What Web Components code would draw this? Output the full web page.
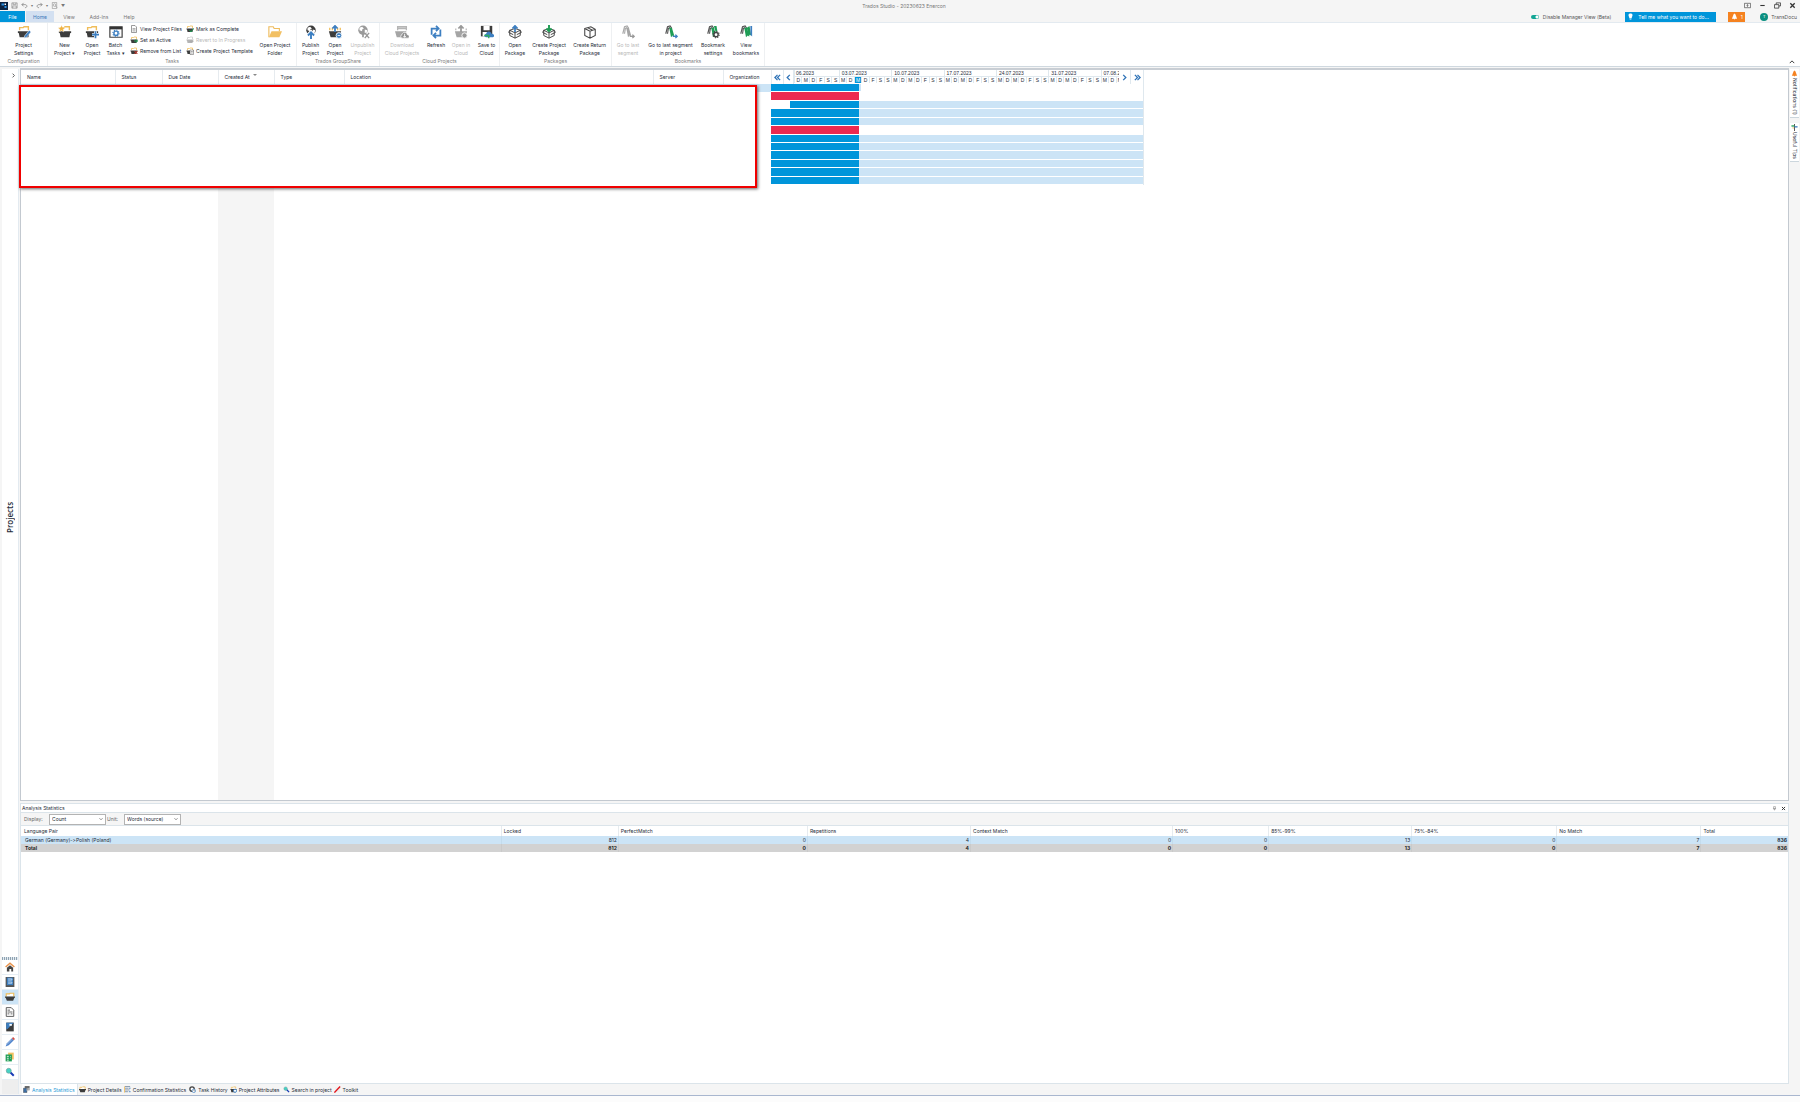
<!DOCTYPE html>
<html lang="en">
<head>
<meta charset="utf-8">
<title>Trados Studio - 20230623 Enercon</title>
<style>
  body {
    margin: 0;
    background: #f5f5f5;
    color: #1f2d3a;
    font-family: Inter, "Open Sans", "Noto Sans", sans-serif;
    font-size: 5px;
    line-height: 8px;
    font-variant-ligatures: none;
  }
</style>
</head>
<body>
<studio-window>
  <title-bar slot="title">Trados Studio - 20230623 Enercon</title-bar>
  <ribbon-tabs slot="tabs"></ribbon-tabs>
  <ribbon-bar slot="ribbon">
    <ribbon-group label="Configuration" style="--w: 48px">
      <ribbon-button icon="settings" style="--w: 48px">Project<br>Settings</ribbon-button>
    </ribbon-group>
    <ribbon-group label="Tasks" style="--w: 249px">
      <ribbon-button icon="new" style="--w: 33px">New<br>Project ▾</ribbon-button>
      <ribbon-button icon="open" style="--w: 22px">Open<br>Project</ribbon-button>
      <ribbon-button icon="batch" style="--w: 25px">Batch<br>Tasks ▾</ribbon-button>
      <ribbon-list style="--w: 56px">
        <ribbon-link icon="doc">View Project Files</ribbon-link>
        <ribbon-link icon="active">Set as Active</ribbon-link>
        <ribbon-link icon="remove">Remove from List</ribbon-link>
      </ribbon-list>
      <ribbon-list style="--w: 72px">
        <ribbon-link icon="complete">Mark as Complete</ribbon-link>
        <ribbon-link icon="revert" disabled>Revert to In Progress</ribbon-link>
        <ribbon-link icon="template">Create Project Template</ribbon-link>
      </ribbon-list>
      <ribbon-button icon="folder" style="--w: 38px">Open Project<br>Folder</ribbon-button>
    </ribbon-group>
    <ribbon-group label="Trados GroupShare" style="--w: 83px">
      <ribbon-button icon="publish" style="--w: 27px">Publish<br>Project</ribbon-button>
      <ribbon-button icon="openServer" style="--w: 22px">Open<br>Project</ribbon-button>
      <ribbon-button icon="unpublish" disabled style="--w: 33px">Unpublish<br>Project</ribbon-button>
    </ribbon-group>
    <ribbon-group label="Cloud Projects" style="--w: 120px">
      <ribbon-button icon="download" disabled style="--w: 44px">Download<br>Cloud Projects</ribbon-button>
      <ribbon-button icon="refresh" style="--w: 24px">Refresh</ribbon-button>
      <ribbon-button icon="openCloud" disabled style="--w: 26px">Open in<br>Cloud</ribbon-button>
      <ribbon-button icon="save" style="--w: 25px">Save to<br>Cloud</ribbon-button>
    </ribbon-group>
    <ribbon-group label="Packages" style="--w: 112px">
      <ribbon-button icon="box" style="--w: 30px">Open<br>Package</ribbon-button>
      <ribbon-button icon="boxNew" style="--w: 39px">Create Project<br>Package</ribbon-button>
      <ribbon-button icon="boxReturn" style="--w: 43px">Create Return<br>Package</ribbon-button>
    </ribbon-group>
    <ribbon-group label="Bookmarks" style="--w: 153px">
      <ribbon-button icon="lastSeg" disabled style="--w: 32px">Go to last<br>segment</ribbon-button>
      <ribbon-button icon="lastProj" style="--w: 53px">Go to last segment<br>in project</ribbon-button>
      <ribbon-button icon="markSettings" style="--w: 32px">Bookmark<br>settings</ribbon-button>
      <ribbon-button icon="marks" style="--w: 34px">View<br>bookmarks</ribbon-button>
    </ribbon-group>
  </ribbon-bar>
  <side-nav slot="nav">Projects</side-nav>
  <project-view>
    <project-list></project-list>
    <gantt-chart></gantt-chart>
  </project-view>
  <analysis-panel></analysis-panel>
  <pane-tabs></pane-tabs>
  <side-tabs slot="aside"></side-tabs>
</studio-window>

<script>
// small helper: every element gets an open shadow root cloned from a template
function define(name, html, setup) {
  const template = document.createElement('template')
  template.innerHTML = html

  window.customElements.define(name, class extends HTMLElement {
    constructor() {
      super();
      this._shadowRoot = this.attachShadow({ mode: 'open' });
      this._shadowRoot.appendChild(template.content.cloneNode(true));
    }

    connectedCallback() {
      if (setup) setup(this, this._shadowRoot);
    }
  });
}

const basket = (fill, tab) => `<path d="M3 6V3h4l1-1h5v4" fill="none" stroke="${tab}" stroke-width="1.6"/><path d="M1 7h14v2h-1l-1 5H3L2 9H1z" fill="${fill}"/>`
const globe = (c) => `<circle cx="8" cy="6" r="5.4" fill="${c}"/><path d="M4 3l3-1 2 2-2 1 0 2-3-1zM10 5l3 1-1 3-2 0z" fill="#fff"/>`
const cube = '<path d="M2 6l6-2 6 2v6l-6 3-6-3zM2 6l6 3 6-3M8 9v6M2 6L.8 8.5 6 11M14 6l1.2 2.5L10 11" fill="none" stroke="#444" stroke-width="1.1"/>'
const ribbonMark = (c, g) => `<path d="M2 10L4 2l3-1 2 3M4 10l1-6 2-1" fill="none" stroke="${c}" stroke-width="1.3"/><path d="M6 3h3l3 10-2-1-2 2z" fill="${g}"/>`
const gear = (x, y, c) => `<circle cx="${x}" cy="${y}" r="2.4" fill="#fff" stroke="${c}" stroke-width="1.6"/><circle cx="${x}" cy="${y}" r="3.6" fill="none" stroke="${c}" stroke-width="1.2" stroke-dasharray="1.4 1.4"/>`

const icons = {
  app: '<rect width="16" height="16" fill="#0c2340"/><path d="M3 3h5v4H3zM9 8h4v4H9z" fill="#2b8fe0"/><path d="M9 3h3v3H9z" fill="#fff"/>',
  disk: '<path d="M2 2h12v12H2zM5 2v4h6V2M4 14V9h8v5" fill="none" stroke="#888" stroke-width="1.5"/>',
  undo: '<path d="M6 2L2 6l4 4M2 6h7c6 0 6 7 0 7" fill="none" stroke="#777" stroke-width="1.6"/>',
  redo: '<path d="M10 2l4 4-4 4M14 6H7c-6 0-6 7 0 7" fill="none" stroke="#777" stroke-width="1.6"/>',
  preview: '<path d="M3 1h10v14H3z" fill="none" stroke="#888" stroke-width="1.3"/><circle cx="8" cy="7" r="3" fill="none" stroke="#888" stroke-width="1.3"/><path d="M10 9l4 4" stroke="#888" stroke-width="1.5"/>',
  settings: basket('#3c3c3c', '#f0bd59') + '<path d="M9 12l5-6 2 2-5 6-3 1z" fill="#3d7fc1" stroke="#fff" stroke-width=".6"/>',
  new: basket('#3c3c3c', '#f0bd59') + '<path d="M4 0l1.2 2.8 3 .2-2.3 2 .8 3L4 6.400 1.500 8l.7-3L0 3l3-.2z" fill="#f0b240" stroke="#fff" stroke-width=".4"/>',
  open: basket('#3c3c3c', '#f0bd59') + '<path d="M12 7v8M8 11h8" stroke="#fff" stroke-width="3.4"/><path d="M12 7v8M8 11h8" stroke="#3d7fc1" stroke-width="2"/>',
  batch: '<path d="M1 2h14v12H1z" fill="#fff" stroke="#444" stroke-width="1.4"/><path d="M1 2h14v3H1z" fill="#333"/>' + gear(8, 9.400, '#3d7fc1'),
  doc: '<path d="M3 1h7l3 3v11H3z" fill="#fff" stroke="#666" stroke-width="1.3"/><path d="M5 7h6M5 9.500h6M5 12h6" stroke="#666"/>',
  active: basket('#3c3c3c', '#f0bd59') + '<path d="M8 10h7M12 7l3 3-3 3" fill="none" stroke="#1f9d55" stroke-width="2"/>',
  remove: basket('#3c3c3c', '#f0bd59') + '<path d="M9 8l6 6M15 8l-6 6" stroke="#d63b2f" stroke-width="2"/>',
  complete: basket('#3c3c3c', '#f0bd59') + '<path d="M7 10l3 4 5-7" fill="none" stroke="#1f9d55" stroke-width="2"/>',
  revert: basket('#b5b5b5', '#c9c9c9') + '<path d="M8 11h7M11 8l-3 3 3 3" fill="none" stroke="#aaa" stroke-width="1.6"/>',
  template: basket('#3c3c3c', '#f0bd59') + '<path d="M8 6h7v9H8z" fill="#fff" stroke="#555"/><path d="M9.500 9h4M9.500 12h4" stroke="#555"/>',
  folder: '<path d="M1 14V2h5l1 2h6v3" fill="#fff" stroke="#eebc5e" stroke-width="1.3"/><path d="M1 14l3-7h12l-3 7z" fill="#f2c063"/>',
  publish: globe('#3c3c3c') + '<path d="M8 16v-7M4.500 12L8 8l3.500 4" fill="none" stroke="#fff" stroke-width="4"/><path d="M8 16V9M4.500 12L8 8.500 11.500 12" fill="none" stroke="#3d7fc1" stroke-width="2.2"/>',
  openServer: '<path d="M2 6V3M5 6V3M11 6V3M14 6V3" stroke="#f0bd59" stroke-width="1.5"/><path d="M1 7h14l-2 7H3z" fill="#3c3c3c"/><path d="M8 8V1M5 4l3-3 3 3" fill="none" stroke="#3d7fc1" stroke-width="2"/><circle cx="12.500" cy="12" r="3.300" fill="#3d7fc1" stroke="#fff"/><path d="M11 12h3" stroke="#fff"/>',
  unpublish: globe('#9a9a9a') + '<path d="M8 8v6" stroke="#9a9a9a" stroke-width="2"/><path d="M10 9l5 6M15 9l-5 6" stroke="#999" stroke-width="1.600"/>',
  download: '<path d="M3 6V2h10v4M3 4h10" fill="none" stroke="#b5b5b5" stroke-width="1.500"/><path d="M0 7h13l-2 7H2z" fill="#a5a5a5"/><path d="M8 15c-2 0-2-4 0-4 1-4 6-3 6 0 3 0 3 4 1 4z" fill="#8f8f8f" stroke="#fff" stroke-width=".8"/><path d="M11 10v4M9.500 12.500L11 14l1.500-1.500" fill="none" stroke="#fff"/>',
  refresh: '<path d="M3 11V4h7M8 1l3 3-3 3M13 5v7H6M8 9l-3 3 3 3" fill="none" stroke="#3d7fc1" stroke-width="2"/>',
  openCloud: '<path d="M2 6V4M14 6V4" stroke="#bbb" stroke-width="1.500"/><path d="M1 7h14l-2 7H3z" fill="#a5a5a5"/><path d="M8 8V1M5 4l3-3 3 3" fill="none" stroke="#999" stroke-width="2"/><circle cx="12" cy="12" r="3" fill="#999" stroke="#fff"/>',
  save: '<path d="M1 1h13v12H1z" fill="#3c3c3c"/><path d="M4 1h7v5H4zM3 8h5v5H3z" fill="#fff"/><path d="M7 14c-3 0-2-4 0-4 1-4 6-3 6 0 4 0 4 4 1 4z" fill="#3d7fc1"/><path d="M5 12h5v3" fill="none" stroke="#2fae60" stroke-width="1.600"/>',
  box: cube + '<path d="M8 8V1M5 4l3-3 3 3" fill="none" stroke="#3d7fc1" stroke-width="2"/>',
  boxNew: cube + '<path d="M8 0v7M5 4l3 3 3-3" fill="none" stroke="#1f9d55" stroke-width="2.200"/>',
  boxReturn: '<path d="M2 4l7-2 5 3v7l-6 3-6-3zM2 4l6 3 6-2M8 7v8M5 3l6 3" fill="none" stroke="#444" stroke-width="1.200"/>',
  lastSeg: ribbonMark('#aaa', '#a5a5a5') + '<path d="M10 13h5M13 11l2 2-2 2" fill="none" stroke="#999" stroke-width="1.500"/>',
  lastProj: ribbonMark('#555', '#1f9d55') + '<path d="M10 13h5M13 11l2 2-2 2" fill="none" stroke="#3d7fc1" stroke-width="1.500"/>',
  markSettings: ribbonMark('#555', '#1f9d55') + '<path d="M9 1l3 0 1 6-2 1z" fill="#1f9d55"/>' + gear(11.500, 11, '#444'),
  marks: ribbonMark('#555', '#1f9d55') + '<path d="M9 3l3-2 2 11-2-1-1 2z" fill="#1f9d55"/><path d="M13 1h2v12l-2-2z" fill="#3d7fc1"/>',
  home: '<path d="M1 8l7-6 7 6" fill="none" stroke="#e8924a" stroke-width="2.400"/><path d="M3 9l5-4 5 4v6h-3v-4H7v4H3z" fill="#444"/>',
  tm: '<rect x="1" y="0" width="14" height="16" fill="#555"/><rect x="3" y="1" width="10" height="12" fill="#3d7fc1"/><path d="M5 3h6v2H5M5 8h6v2H5" fill="none" stroke="#cfe0f2" stroke-width="1.200"/>',
  projects: '<path d="M2 7V3h5l1-1h6v5" fill="#fff" stroke="#f0bd59" stroke-width="1.800"/><path d="M0 7h16v2h-1l-2 5H3L1 9H0z" fill="#3c3c3c"/>',
  files: '<path d="M2 1h8l4 4v10H2z" fill="#fff" stroke="#555" stroke-width="1.500"/><path d="M4 5h4M4 8h8M4 11h3M9 11h3" stroke="#555" stroke-width="1.400"/>',
  editor: '<rect x="2" y="1" width="12" height="14" fill="#3c3c3c"/><path d="M2 1h12L4 11H2z" fill="#3d7fc1"/><path d="M7 3h4v3H7z" fill="#fff"/>',
  pen: '<path d="M1 15l2-5 8-8 3 3-8 8z" fill="#4f83cc"/><path d="M11 2l2-2 3 3-2 2z" fill="#d0504a"/><path d="M3 12l8-8" stroke="#cde" />',
  sheets: '<path d="M5 1h9v11H5z" fill="#f2c063"/><path d="M1 4h10v11H1z" fill="#1f9d55"/><path d="M3 7h3M3 10h3M8 7h1M8 10h1M3 13h3" stroke="#fff" stroke-width="1.300"/>',
  search: '<path d="M8 8l6 6" stroke="#1739b5" stroke-width="3"/><circle cx="6" cy="6" r="4" fill="#46d2c4" stroke="#6a9a9a"/>',
  stats: '<path d="M4 1h11v9H4z" fill="#888"/><path d="M4 1h11v2H4z" fill="#333"/><path d="M1 5h8v10H1z" fill="#3c6ea5" stroke="#444"/><path d="M9 5v6M12 5v5" stroke="#fff"/>',
  confirm: '<path d="M2 1h12M2 5h8M2 9h11M2 13h7" stroke="#7a8ea5" stroke-width="2"/><path d="M1 1v14" stroke="#f0bd59" stroke-width="2"/><path d="M11 5h4M11 13h4" stroke="#3d7fc1" stroke-width="2"/>',
  history: '<circle cx="7" cy="7" r="5" fill="#fff" stroke="#444" stroke-width="3"/><circle cx="11" cy="11" r="4" fill="#fff" stroke="#3d7fc1" stroke-width="1.500"/><path d="M11 8v3h3" fill="none" stroke="#444"/>',
  attributes: basket('#3c3c3c', '#f0bd59') + '<circle cx="11.500" cy="11" r="3.500" fill="#fff" stroke="#3d7fc1" stroke-width="2"/>',
  toolkit: '<path d="M3 3h10v11H3z" fill="#eee"/><path d="M1 15L14 1" stroke="#e3131b" stroke-width="3"/>',
  bell: '<path d="M8 1l2 2 3 8 1 2H2l1-2 3-8zM6 13h4l-2 2z" fill="currentColor"/>',
  bulb: '<path d="M8 1c6 0 5 6 3 8v3H5V9C3 7 2 1 8 1zM6 13h4v2H6z" fill="#fff"/>',
  signpost: '<path d="M8 0v16" stroke="#444" stroke-width="2"/><path d="M1 3h7v3H1z" fill="#1f9d55"/><path d="M8 5h7v3H8z" fill="#3d7fc1"/><path d="M3 8h4v2H3z" fill="#f0bd59"/>',
  ribbonOpts: '<path d="M1 3h14v10H1z" fill="none" stroke="#444" stroke-width="1.500"/><path d="M8 6v5M6 8l2-2 2 2" fill="none" stroke="#444" stroke-width="1.500"/>',
  min: '<path d="M3 8h10" stroke="#333" stroke-width="2.500"/>',
  restore: '<path d="M5 5V2h10v7h-4M1 6h10v8H1z" fill="none" stroke="#333" stroke-width="1.800"/>',
  close: '<path d="M3 3l10 10M13 3L3 13" stroke="#333" stroke-width="3"/>',
  pin: '<path d="M5 2h6v7H5zM3 9h10M8 9v5" fill="none" stroke="#777" stroke-width="1.600"/>',
  up: '<path d="M2 11l6-6 6 6" fill="none" stroke="#333" stroke-width="2.500"/>',
  right: '<path d="M5 2l6 6-6 6" fill="none" stroke="currentColor" stroke-width="3"/>',
  left: '<path d="M11 2L5 8l6 6" fill="none" stroke="currentColor" stroke-width="3"/>',
  first: '<path d="M8 2L2 8l6 6M14 2L8 8l6 6" fill="none" stroke="currentColor" stroke-width="3"/>',
  last: '<path d="M8 2l6 6-6 6M2 2l6 6-6 6" fill="none" stroke="currentColor" stroke-width="3"/>'
}

define('ui-icon', `
  <style>
  :host { display: block; flex: none; width: var(--size, 8px); height: var(--size, 8px); }
  svg { display: block; width: 100%; height: 100%; }
  </style>
  <svg viewBox="0 0 16 16" aria-hidden="true"></svg>
`, (el, root) => {
  root.querySelector('svg').innerHTML = icons[el.getAttribute('name')] || '';
})

const resetButton = 'button { border: 0; padding: 0; background: none; color: inherit; font: inherit; cursor: pointer; }'

define('studio-window', `
  <style>
  :host { display: flex; flex-direction: column; min-height: 100vh; }
  .body { flex: 1; display: flex; }
  .center { flex: 1; display: flex; flex-direction: column; min-width: 0; padding-top: 1px; }
  .foot { height: 6px; background: #fcfcfc; border-top: 1px solid #a9b7cf; }
  </style>
  <slot name="title"></slot>
  <slot name="tabs"></slot>
  <slot name="ribbon"></slot>
  <div class="body">
    <slot name="nav"></slot>
    <div class="center"><slot></slot></div>
    <slot name="aside"></slot>
  </div>
  <div class="foot"></div>
`)

define('title-bar', `
  <style>
  :host {
    display: grid;
    grid-template-columns: 1fr auto 1fr;
    align-items: center;
    height: 11px;
    color: #777;
    --size: 7px;
  }
  ${resetButton}
  .quick, .win { display: flex; align-items: center; }
  .quick { gap: 3px; font-size: 4px; }
  .name { padding-left: 8px; }
  .win { justify-content: flex-end; gap: 8px; padding-right: 4px; }
  ui-icon[name=app] { --size: 8px; }
  </style>
  <div class="quick">
    <ui-icon name="app"></ui-icon>
    <button aria-label="Save"><ui-icon name="disk"></ui-icon></button>
    <button aria-label="Undo"><ui-icon name="undo"></ui-icon></button>▾
    <button aria-label="Redo"><ui-icon name="redo"></ui-icon></button>▾
    <button aria-label="Preview"><ui-icon name="preview"></ui-icon></button>▼
  </div>
  <div class="name"><slot></slot></div>
  <div class="win">
    <button aria-label="Ribbon options"><ui-icon name="ribbonOpts"></ui-icon></button>
    <button aria-label="Minimize"><ui-icon name="min"></ui-icon></button>
    <button aria-label="Restore"><ui-icon name="restore"></ui-icon></button>
    <button aria-label="Close"><ui-icon name="close"></ui-icon></button>
  </div>
`)

define('ribbon-tabs', `
  <style>
  :host { display: flex; align-items: stretch; height: 11px; border-bottom: 1px solid #e3eaf0; color: #777; }
  ${resetButton}
  .tab { min-width: 30px; }
  .file { min-width: 25px; margin-right: 1px; background: #0095da; color: #fff; }
  .home { min-width: 28px; background: #d3e0f1; color: #3a78b9; }
  .right { margin-left: auto; display: flex; align-items: center; }
  label { display: flex; align-items: center; gap: 4px; margin-right: 14px; color: #555; }
  .switch {
    appearance: none; width: 8px; height: 4px; margin: 0; border-radius: 2px;
    background: radial-gradient(circle at 6px 2px, #fff 1px, #12a594 2px);
  }
  .tell { display: flex; align-items: center; gap: 4px; width: 91px; height: 10px; padding: 0 2px; box-sizing: border-box; background: #0095da; color: #fff; --size: 7px; }
  .tell input { flex: 1; min-width: 0; padding: 0; border: 0; background: none; font: inherit; color: #fff; }
  .tell input::placeholder { color: #fff; opacity: 1; }
  .bell { display: flex; align-items: center; justify-content: center; gap: 3px; width: 17px; height: 10px; margin: 0 15px 0 12px; background: #f58220; color: #fff; --size: 7px; }
  .user { display: flex; align-items: center; gap: 3px; color: #555; padding-right: 3px; }
  .user i { width: 8px; height: 8px; border-radius: 50%; background: #0b8f81; color: #fff; font-style: normal; font-size: 4px; text-align: center; }
  </style>
  <button class="tab file">File</button>
  <button class="tab home">Home</button>
  <button class="tab">View</button>
  <button class="tab">Add-Ins</button>
  <button class="tab">Help</button>
  <div class="right">
    <label><input type="checkbox" class="switch">Disable Manager View (Beta)</label>
    <div class="tell"><ui-icon name="bulb"></ui-icon><input type="text" aria-label="Tell me" placeholder="Tell me what you want to do..."></div>
    <button class="bell"><ui-icon name="bell"></ui-icon>1</button>
    <div class="user"><i>T</i>TransDocu</div>
  </div>
`)

define('ribbon-bar', `
  <style>
  :host { display: flex; height: 44px; background: #fff; border-bottom: 1px solid #cfd8df; box-sizing: border-box; }
  ${resetButton}
  button { margin: auto 5px 1px auto; --size: 6px; }
  </style>
  <slot></slot>
  <button aria-label="Collapse ribbon"><ui-icon name="up"></ui-icon></button>
`)

define('ribbon-group', `
  <style>
  :host { display: flex; flex-direction: column; width: var(--w); padding-top: 2px; box-sizing: border-box; border-right: 1px solid #eef0f2; }
  .items { display: flex; height: 32px; }
  .label { text-align: center; color: #7c7c7c; }
  </style>
  <div class="items"><slot></slot></div>
  <div class="label"></div>
`, (el, root) => {
  root.querySelector('.label').textContent = el.getAttribute('label');
})

define('ribbon-button', `
  <style>
  :host { display: block; width: var(--w); }
  ${resetButton}
  button { display: flex; flex-direction: column; align-items: center; width: 100%; white-space: nowrap; text-align: center; gap: 2px; --size: 14px; }
  button:hover { background: #e5f1fb; }
  button:disabled { color: #b9b9b9; }
  span { display: block; }
  </style>
  <button><ui-icon></ui-icon><span><slot></slot></span></button>
`, (el, root) => {
  const icon = document.createElement('ui-icon');
  icon.setAttribute('name', el.getAttribute('icon'));
  root.querySelector('ui-icon').replaceWith(icon);
  root.querySelector('button').disabled = el.hasAttribute('disabled');
})

define('ribbon-list', `
  <style>
  :host { display: flex; flex-direction: column; gap: 3px; width: var(--w); padding-left: 2px; box-sizing: border-box; }
  </style>
  <slot></slot>
`)

define('ribbon-link', `
  <style>
  :host { display: block; }
  ${resetButton}
  button { display: flex; align-items: center; gap: 2px; white-space: nowrap; --size: 8px; }
  button:disabled { color: #b9b9b9; }
  </style>
  <button><ui-icon></ui-icon><slot></slot></button>
`, (el, root) => {
  const icon = document.createElement('ui-icon');
  icon.setAttribute('name', el.getAttribute('icon'));
  root.querySelector('ui-icon').replaceWith(icon);
  root.querySelector('button').disabled = el.hasAttribute('disabled');
})

define('side-nav', `
  <style>
  :host { display: flex; flex-direction: column; width: 17px; margin: 2px 1px 1px 2px; background: #fff; border-right: 1px solid #e3eaf0; box-sizing: border-box; }
  ${resetButton}
  .expand { align-self: flex-end; margin: 4px 2px 0 0; --size: 5px; color: #555; }
  .title { flex: 1; display: flex; align-items: center; justify-content: center; writing-mode: vertical-rl; transform: rotate(180deg); font-size: 8px; line-height: 14px; font-family: "Open Sans", sans-serif; font-weight: 600; }
  .grip { height: 3px; background: repeating-linear-gradient(90deg, #8fa3b2 0 1px, #e3eaf0 1px 2px); }
  nav { display: flex; flex-direction: column; --size: 10px; }
  nav button { display: flex; align-items: center; justify-content: center; height: 15px; box-sizing: border-box; border-bottom: 1px solid #e6eef4; }
  nav .on { background: #cce4f6; }
  .rest { height: 14px; background: #eee; }
  </style>
  <button class="expand" aria-label="Expand"><ui-icon name="right"></ui-icon></button>
  <div class="title"><slot></slot></div>
  <div class="grip"></div>
  <nav></nav>
  <div class="rest"></div>
`, (el, root) => {
  root.querySelector('nav').innerHTML = ['home', 'tm', 'projects', 'files', 'editor', 'pen', 'sheets', 'search']
    .map(n => `<button aria-label="${n}" class="${n === 'projects' ? 'on' : ''}"><ui-icon name="${n}"></ui-icon></button>`).join('');
})

define('side-tabs', `
  <style>
  :host { display: flex; flex-direction: column; align-items: flex-start; gap: 5px; width: 11px; padding: 2px 0 0 1px; box-sizing: border-box; }
  ${resetButton}
  button { display: flex; align-items: center; gap: 1px; padding: 1px 0 2px; background: #fff; border-bottom: 1px solid #ccd6dd; writing-mode: vertical-rl; width: 9px; line-height: 8px; white-space: nowrap; --size: 7px; }
  [name=bell] { color: #f58220; }
  </style>
  <button><ui-icon name="bell"></ui-icon>Notifications (1)</button>
  <button><ui-icon name="signpost"></ui-icon>Useful Tips</button>
`)

define('project-view', `
  <style>
  :host {
    flex: 1;
    display: grid;
    grid-template-columns: 750px 373px 1fr;
    margin-bottom: 2px;
    background: #fff;
    border: 1px solid #c3c9d0;
    border-top: 2px solid #c9ced4;
  }
  </style>
  <slot></slot>
`)

define('project-list', `
  <style>
  :host { display: block; position: relative; }
  table { width: 100%; height: 100%; border-collapse: collapse; table-layout: fixed; }
  th { height: 14px; padding: 0 0 1px 6px; box-sizing: border-box; border-right: 1px solid #e6ebef; font-weight: 400; text-align: left; vertical-align: middle; }
  td { padding: 0; }
  .selected td { height: 8px; background: #cce4f6; }
  .rest .sorted { background: #f5f5f5; }
  .arrow { display: inline-block; margin: 0 0 3px 2px; border: 2px solid transparent; border-top-color: #888; border-bottom: 0; }
  .mask { position: absolute; top: 15px; left: -2px; right: 14px; height: 99px; background: #fff; border: 2px solid #f00000; box-shadow: 1px 1px 3px #666; }
  </style>
  <table>
    <colgroup><col style="width:94px"><col style="width:47px"><col style="width:56px"><col style="width:56px"><col style="width:70px"><col style="width:309px"><col style="width:70px"><col style="width:48px"></colgroup>
    <thead><tr><th>Name</th><th>Status</th><th>Due Date</th><th>Created At <span class="arrow"></span></th><th>Type</th><th>Location</th><th>Server</th><th>Organization</th></tr></thead>
    <tbody>
      <tr class="selected"><td colspan="8"></td></tr>
      <tr class="rest"><td colspan="3"></td><td class="sorted"></td><td colspan="4"></td></tr>
    </tbody>
  </table>
  <div class="mask"></div>
`)

define('gantt-chart', `
  <style>
  :host { display: block; font: 5px/6px "Liberation Sans", Arial, sans-serif; }
  ${resetButton}
  header { display: grid; grid-template-columns: 13px 10px 1fr 12px 13px; height: 14px; }
  header button { display: flex; align-items: center; justify-content: center; border-right: 1px solid #dfe8ee; color: #2f73b7; --size: 7px; }
  .scale { overflow: hidden; }
  .weeks, .days { display: grid; grid-template-columns: repeat(44, 1fr); width: 329px; }
  .weeks span { grid-column: span 7; padding-left: 2px; border-left: 1px solid #dfe8ee; height: 6px; box-sizing: border-box; white-space: nowrap; }
  .weeks span:first-child { grid-column: span 6; padding-left: 1px; }
  .weeks span:last-child { grid-column: span 3; }
  .days span { height: 7px; line-height: 7px; text-align: center; box-sizing: border-box; border-left: 1px solid #dfe8ee; border-top: 1px solid #dfe8ee; }
  .days .today { background: #0095da; color: #fff; }
  .rows { display: grid; grid-auto-rows: 1fr; height: 101px; border-right: 1px solid #dfe8ee; }
  .row { display: flex; padding-bottom: 1px; }
  .done { width: 88px; background: #0095da; }
  .late .done { background: #ec2a50; }
  .short .done { margin-left: 19px; width: 69px; }
  .left { flex: 1; background: #cce4f6; }
  .late .left { visibility: hidden; }
  .first .left { flex: 0 0 2px; }
  </style>
  <header>
    <button aria-label="First"><ui-icon name="first"></ui-icon></button>
    <button aria-label="Previous"><ui-icon name="left"></ui-icon></button>
    <div class="scale"><div class="weeks"></div><div class="days"></div></div>
    <button aria-label="Next"><ui-icon name="right"></ui-icon></button>
    <button aria-label="Last"><ui-icon name="last"></ui-icon></button>
  </header>
  <div class="rows"></div>
`, (el, root) => {
  const weeks = ['06.2023', '03.07.2023', '10.07.2023', '17.07.2023', '24.07.2023', '31.07.2023', '07.08.2023'];
  root.querySelector('.weeks').innerHTML = weeks.map(w => `<span>${w}</span>`).join('');
  root.querySelector('.days').innerHTML = [...Array(44).keys()]
    .map(i => `<span class="${i === 8 ? 'today' : ''}">${'DMDFSSM'[i % 7]}</span>`).join('');
  root.querySelector('.rows').innerHTML = ['first', 'late', 'short', '', '', 'late', '', '', '', '', '', '']
    .map(c => `<div class="row ${c}"><div class="done"></div><div class="left"></div></div>`).join('');
})

define('analysis-panel', `
  <style>
  :host { display: flex; flex-direction: column; height: 281px; border: 1px solid #dbe4ea; box-sizing: border-box; }
  ${resetButton}
  header { display: flex; align-items: center; height: 8px; padding: 0 2px 0 1px; background: #fff; border-bottom: 1px solid #dbe4ea; --size: 5px; }
  header button { margin-left: 4px; }
  header button:first-of-type { margin-left: auto; }
  form { display: flex; align-items: center; height: 12px; padding-left: 3px; color: #666; }
  select { appearance: none; width: 57px; height: 11px; padding: 0 2px; border: 1px solid #b3b3b3; border-radius: 0; font: inherit; color: #1f2d3a; background: #fff; }
  .box { display: flex; align-items: center; margin-right: 1px; }
  .box ui-icon { --size: 4px; margin-left: -7px; margin-right: 3px; transform: rotate(90deg); }
  .box label { width: 25px; }
  .box + .box label { width: 17px; }
  .grid { flex: 1; background: #fff; border-top: 1px solid #dbe4ea; }
  table { width: 100%; border-collapse: collapse; table-layout: fixed; }
  th { height: 10px; padding: 0 2px; font-weight: 400; text-align: left; border-left: 1px solid #e6ebef; }
  th:first-child { border-left: 0; padding-left: 3px; }
  td { height: 8px; padding: 0 1px; line-height: 7px; text-align: right; border-left: 1px solid #c3dced; }
  td:first-child { text-align: left; border-left: 0; padding-left: 4px; }
  td:last-child, .total td { font-weight: 700; }
  .row { background: #cce4f6; }
  .total { background: #d2d2d2; }
  .total td { border-color: #cacaca; color: #222; }
  </style>
  <header>Analysis Statistics
    <button aria-label="Pin"><ui-icon name="pin"></ui-icon></button>
    <button aria-label="Close"><ui-icon name="close"></ui-icon></button>
  </header>
  <form>
    <div class="box"><label for="display">Display:</label><select id="display"><option>Count</option></select><ui-icon name="right"></ui-icon></div>
    <div class="box"><label for="unit">Unit:</label><select id="unit"><option>Words (source)</option></select><ui-icon name="right"></ui-icon></div>
  </form>
  <div class="grid">
    <table>
      <colgroup><col style="width:480px"><col style="width:117px"><col style="width:189px"><col style="width:163px"><col style="width:202px"><col style="width:96px"><col style="width:143px"><col style="width:145px"><col style="width:144px"><col style="width:87px"></colgroup>
      <thead><tr><th>Language Pair</th><th>Locked</th><th>PerfectMatch</th><th>Repetitions</th><th>Context Match</th><th>100%</th><th>85%-99%</th><th>75%-84%</th><th>No Match</th><th>Total</th></tr></thead>
      <tbody>
        <tr class="row"><td>German (Germany)-&gt;Polish (Poland)</td><td>812</td><td>0</td><td>4</td><td>0</td><td>0</td><td>13</td><td>0</td><td>7</td><td>836</td></tr>
        <tr class="total"><td>Total</td><td>812</td><td>0</td><td>4</td><td>0</td><td>0</td><td>13</td><td>0</td><td>7</td><td>836</td></tr>
      </tbody>
    </table>
  </div>
`)

define('pane-tabs', `
  <style>
  :host { display: flex; height: 11px; padding-left: 2px; --size: 7px; }
  ${resetButton}
  button { display: flex; align-items: center; gap: 2px; padding: 0 2px 0 1px; white-space: nowrap; }
  button + button { padding-left: 0; }
  button:nth-of-type(even) { padding-left: 1px; }
  .on { background: #fff; color: #2b9bd8; border-right: 1px solid #dbe4ea; }
  </style>
`, (el, root) => {
  const tabs = { stats: 'Analysis Statistics', projects: 'Project Details', confirm: 'Confirmation Statistics', history: 'Task History', attributes: 'Project Attributes', search: 'Search in project', toolkit: 'Toolkit' };
  for (const [icon, text] of Object.entries(tabs)) {
    const button = document.createElement('button');
    button.innerHTML = `<ui-icon name="${icon}"></ui-icon>${text}`;
    if (icon === 'stats') button.className = 'on';
    root.appendChild(button);
  }
})
</script>
</body>
</html>
